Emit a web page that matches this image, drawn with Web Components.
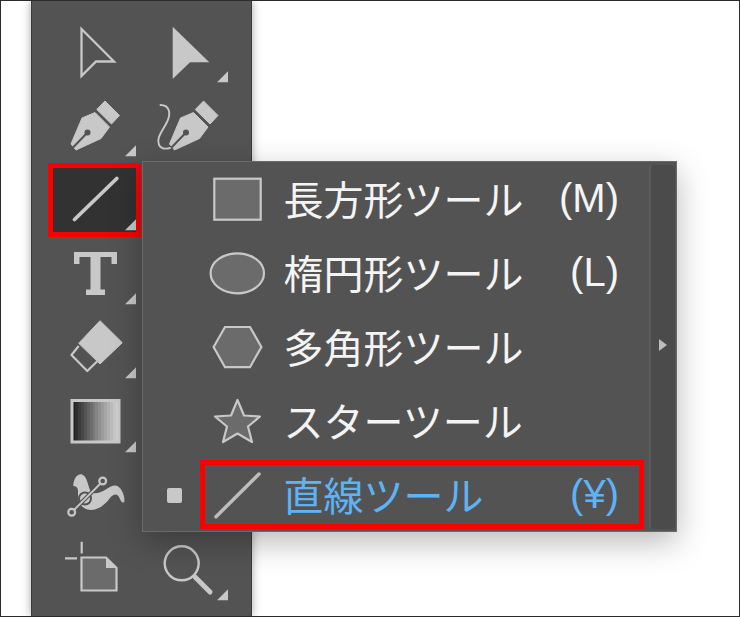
<!DOCTYPE html>
<html lang="ja">
<head>
<meta charset="utf-8">
<title>直線ツール</title>
<style>
  html, body { margin: 0; padding: 0; background: #fff; }
</style>
</head>
<body>
<app-shot>
  <tool-panel>
    <tool-cell col="0" row="0" icon="select"></tool-cell>
    <tool-cell col="1" row="0" icon="direct" more></tool-cell>
    <tool-cell col="0" row="1" icon="pen" more></tool-cell>
    <tool-cell col="1" row="1" icon="curve"></tool-cell>
    <tool-cell col="0" row="2" icon="line" more active></tool-cell>
    <tool-cell col="1" row="2"></tool-cell>
    <tool-cell col="0" row="3" icon="type" more></tool-cell>
    <tool-cell col="1" row="3"></tool-cell>
    <tool-cell col="0" row="4" icon="eraser" more></tool-cell>
    <tool-cell col="1" row="4"></tool-cell>
    <tool-cell col="0" row="5" icon="gradient" more></tool-cell>
    <tool-cell col="1" row="5"></tool-cell>
    <tool-cell col="0" row="6" icon="puppet"></tool-cell>
    <tool-cell col="1" row="6"></tool-cell>
    <tool-cell col="0" row="7" icon="artboard"></tool-cell>
    <tool-cell col="1" row="7" icon="zoom" more></tool-cell>
  </tool-panel>
  <tool-flyout slot="over">
    <flyout-item shortcut="(M)">
      <svg slot="icon" width="60" height="54" viewBox="207 172 60 54"><rect x="214.3" y="178.7" width="46.4" height="41" fill="#6b6b6b" stroke="#c8c8c8" stroke-width="2.2"/></svg>
      長方形ツール
    </flyout-item>
    <flyout-item shortcut="(L)">
      <svg slot="icon" width="60" height="54" viewBox="207 246 60 54"><ellipse cx="237.3" cy="273.3" rx="26.7" ry="20" fill="#6b6b6b" stroke="#c8c8c8" stroke-width="2.2"/></svg>
      楕円形ツール
    </flyout-item>
    <flyout-item>
      <svg slot="icon" width="60" height="54" viewBox="207 320 60 54"><path d="M213.6,347 L225,327 H250 L261.4,347 L250,367.2 H225 Z" fill="#6b6b6b" stroke="#c8c8c8" stroke-width="2.2"/></svg>
      多角形ツール
    </flyout-item>
    <flyout-item>
      <svg slot="icon" width="60" height="54" viewBox="207 394 60 54"><path d="M237.5,400 L244,415.5 L260,416.5 L248,426.5 L252,442 L237.5,433.5 L223,442 L227,426.5 L215,416.5 L231,415.5 Z" fill="#6b6b6b" stroke="#c8c8c8" stroke-width="2.2" stroke-linejoin="round"/></svg>
      スターツール
    </flyout-item>
    <flyout-item shortcut="(¥)" current marked>
      <svg slot="icon" width="60" height="54" viewBox="207 468 60 54"><path d="M216,516.7 L259,474" fill="none" stroke="#bdbdbd" stroke-width="3.5" stroke-linecap="round"/></svg>
      直線ツール
    </flyout-item>
  </tool-flyout>
</app-shot>

<script>
const FG = "#c8c8c8", BG = "#535353";
const nib = (dx) => `
  <path transform="translate(${dx} 0)" d="M105,101 L119.5,115.5 L111.5,124 L96.8,109.5 Z" fill="${FG}" stroke="${FG}" stroke-linejoin="round"/>
  <path transform="translate(${dx} 0)" d="M95,112.5 L109.5,127 L101,138.5 L76,150 L71,144 L82,118 Z" fill="${FG}" stroke="${FG}" stroke-linejoin="round"/>
  <path transform="translate(${dx} 0)" d="M73,147.5 L87,133" stroke="${BG}" stroke-width="2" fill="none"/>
  <circle transform="translate(${dx} 0)" cx="87.5" cy="132.5" r="3" fill="${BG}"/>`;

// gradient swatch is banded in the reference, so hard stops
const bands = Array.from({ length: 16 }, (_, i) => {
  const v = Math.round(30 + 180 * Math.pow(i / 15, 0.9));
  const c = `rgb(${v},${v},${v})`;
  return `<stop offset="${i / 16}" stop-color="${c}"/><stop offset="${(i + 1) / 16}" stop-color="${c}"/>`;
}).join("");

// icon paths are in page coordinates, tool-cell maps them with its viewBox
const ICONS = {
  select: `<path d="M81.5,29 L114,61.5 L96,61.5 L81.5,76 Z" fill="none" stroke="${FG}" stroke-width="2.3"/>`,
  direct: `<path d="M172.7,26.7 L209.3,62.3 L190,62.3 L172.7,79 Z" fill="${FG}"/>`,
  pen: nib(0),
  curve: nib(98.5) + `<path d="M160.5,105 C170,105 171,114 167,122 C162,132 156,138 159,145 C161,149 166,149 170,148" fill="none" stroke="${FG}" stroke-width="1.9" stroke-linecap="round"/>`,
  line: `<path d="M74.5,219.5 L116.8,178.5" stroke="${FG}" stroke-width="3.8" stroke-linecap="round"/>`,
  type: `<path d="M74,252 H117 V264 H111.5 V257 H100.5 V289.5 H105 V295 H86 V289.5 H90.5 V257 H79.5 V264 H74 Z" fill="${FG}"/>`,
  eraser: `<path d="M100,320.7 L122.3,342.7 L100,364 L78.7,343.3 Z" fill="${FG}" stroke="${FG}" stroke-linejoin="round"/>
    <path d="M78.7,346 L71.5,355 L87.3,371 L97,361.5" fill="none" stroke="${FG}" stroke-width="2.2" stroke-linejoin="round"/>`,
  gradient: `<rect x="72" y="400.5" width="47" height="41.5" fill="url(#gr)" stroke="${FG}" stroke-width="3"/>
    <defs><linearGradient id="gr">${bands}</linearGradient></defs>`,
  puppet: `<path d="M73.3,486 C73.5,478 78,473.5 82,474.5 C87,476 88,486 90.5,491 C93,495 100,493 105,490 C111,486 116,483 120,488 C123,492 125,497 124.3,502 C122,504 120.5,500 119,497 C117,493 113,494 110,498 C105,505 98,510 91,510 C84,510 78,504 78,497 C78,491 79,486 73.3,486 Z" fill="${FG}"/>
    <circle cx="85" cy="498.5" r="6" fill="none" stroke="${BG}" stroke-width="2"/>
    <path d="M74,510 L100.5,483.5" stroke="${BG}" stroke-width="4"/>
    <path d="M74,510 L100.5,483.5" stroke="${FG}" stroke-width="1.8"/>
    <circle cx="71.7" cy="512.3" r="3.4" fill="${BG}" stroke="${FG}" stroke-width="2.2"/>
    <circle cx="102.7" cy="481" r="3.4" fill="${BG}" stroke="${FG}" stroke-width="2.2"/>`,
  artboard: `<path d="M81.7,541.7 V553.5 M65,558.3 H77" stroke="${FG}" stroke-width="2.2" fill="none"/>
    <path d="M81.5,557.5 H106 L116.5,568 V590.5 H81.5 Z" fill="#6b6b6b" stroke="${FG}" stroke-width="2.2"/>
    <path d="M106,557.5 V568 H116.5 Z" fill="${FG}"/>`,
  zoom: `<circle cx="181.7" cy="563.3" r="17" fill="none" stroke="${FG}" stroke-width="2.4"/>
    <path d="M195,577 L210,592" stroke="${FG}" stroke-width="5" stroke-linecap="round"/>`
};

class AppShot extends HTMLElement {
  constructor() {
    super();
    this.attachShadow({ mode: "open" }).innerHTML = `
      <style>
        :host { display: block; position: relative; width: 740px; height: 617px; box-sizing: border-box;
          border: 1px solid #2b2b2b; background: #fff; overflow: hidden;
          font-family: "Noto Sans CJK JP", "Noto Sans", sans-serif; }
        .over { position: absolute; left: 141px; top: 160px; }
      </style>
      <slot></slot>
      <div class="over"><slot name="over"></slot></div>`;
  }
}

class ToolPanel extends HTMLElement {
  constructor() {
    super();
    this.attachShadow({ mode: "open" }).innerHTML = `
      <style>
        :host { display: grid; grid-template-columns: repeat(2, 92px); grid-auto-rows: 74px; align-content: start;
          box-sizing: border-box; width: 221px; height: 615px; margin-left: 30px; padding: 17px 0 0 20px;
          background: ${BG}; border-left: 1px solid #3c3c3c; border-right: 1px solid #3c3c3c;
          box-shadow: 0 0 9px rgba(0,0,0,.35); }
      </style>
      <slot></slot>`;
  }
}

class ToolCell extends HTMLElement {
  constructor() { super(); this.attachShadow({ mode: "open" }); }
  connectedCallback() {
    const col = +this.getAttribute("col"), row = +this.getAttribute("row");
    const x = 52 + 92 * col, y = 18 + 74 * row;
    const more = this.hasAttribute("more")
      ? `<path d="M${x + 73},${y + 64.3} L${x + 84},${y + 53.3} V${y + 64.3} Z" fill="${FG}"/>` : "";
    this.shadowRoot.innerHTML = `
      <style>
        :host { display: block; position: relative; }
        svg { position: absolute; inset: 0; overflow: visible; }
        .active { position: absolute; left: -4px; right: 3px; top: -3px; bottom: 3px; box-sizing: border-box;
          border: 5px solid #fa0000; background: #323232; }
      </style>
      ${this.hasAttribute("active") ? `<div class="active"></div>` : ""}
      <svg width="92" height="74" viewBox="${x} ${y} 92 74">${ICONS[this.getAttribute("icon")] || ""}${more}</svg>`;
  }
}

class ToolFlyout extends HTMLElement {
  constructor() {
    super();
    this.attachShadow({ mode: "open" }).innerHTML = `
      <style>
        :host { display: flex; box-sizing: border-box; width: 535px; height: 371px; background: ${BG};
          border: 1px solid #6a6a6a; box-shadow: 0 10px 30px rgba(0,0,0,.28); }
        .items { display: flex; flex-direction: column; width: 505px; }
        .side { flex: 1; display: flex; align-items: center; justify-content: center; margin: 3px 1px 2px 3px;
          background: #4b4b4b; border-radius: 3px; box-shadow: -2px 0 0 #5b5b5b; }
        .side i { display: block; width: 0; height: 0; margin-top: -4px; border-left: 8px solid #bdbdbd;
          border-top: 6.5px solid transparent; border-bottom: 6.5px solid transparent; }
      </style>
      <div class="items"><slot></slot></div>
      <div class="side"><i></i></div>`;
  }
}

class FlyoutItem extends HTMLElement {
  constructor() {
    super();
    const key = this.getAttribute("shortcut") || "";
    this.attachShadow({ mode: "open" }).innerHTML = `
      <style>
        :host { display: grid; grid-template-columns: 64px 60px 1fr auto; align-items: center; position: relative;
          height: 74px; padding-right: 29px; box-sizing: border-box; flex: none;
          font-size: 40px; line-height: 54px; color: #f4f4f4; }
        :host([current]) { color: #5eb3f6; }
        .bullet { justify-self: start; margin-left: 24px; width: 15px; height: 15px; border-radius: 2px; }
        :host([current]) .bullet { background: ${FG}; }
        .label { margin: 0 0 3px 16.5px; white-space: nowrap; }
        .key { font-family: "Liberation Sans", "Noto Sans CJK JP", sans-serif; font-size: 40px; margin-bottom: 3px; }
        .icon { display: flex; }
        .mark { display: none; position: absolute; left: 57px; right: 4px; top: 2px; bottom: 3px;
          box-sizing: border-box; border: 5px solid #fa0000; }
        :host([marked]) .mark { display: block; }
      </style>
      <span class="bullet"></span>
      <span class="icon"><slot name="icon"></slot></span>
      <span class="label"><slot></slot></span>
      <span class="key">${key}</span>
      <span class="mark"></span>`;
  }
}

customElements.define("app-shot", AppShot);
customElements.define("tool-panel", ToolPanel);
customElements.define("tool-cell", ToolCell);
customElements.define("tool-flyout", ToolFlyout);
customElements.define("flyout-item", FlyoutItem);
</script>
</body>
</html>
